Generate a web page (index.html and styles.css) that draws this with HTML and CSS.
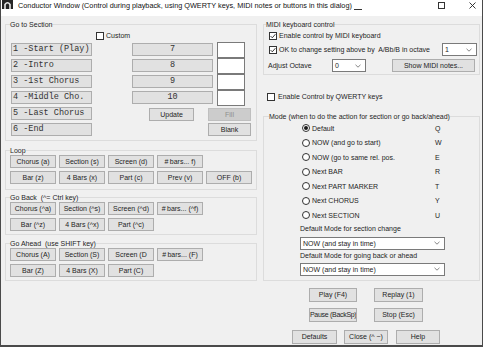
FILE: index.html
```html
<!DOCTYPE html>
<html>
<head>
<meta charset="utf-8">
<title>Conductor Window</title>
<link rel="stylesheet" href="styles.css">
</head>
<body>
<div class="window">
  <div class="titlebar">
    <svg class="appicon" width="11" height="9" viewBox="0 0 11 9"><rect x="0" y="0" width="11" height="9" fill="#262626"/><path d="M3 9 V4.5 Q5.5 1 8 4.5 V9" fill="none" stroke="#e8e8e8" stroke-width="1.6"/></svg>
    <span class="title">Conductor Window (Control during playback, using QWERTY keys, MIDI notes or buttons in this dialog)</span>
    <span class="ctl ctl-min"></span>
    <span class="ctl ctl-max"></span>
    <svg class="ctl ctl-close" width="7" height="7" viewBox="0 0 7 7"><path d="M0.5 0.5 L6.5 6.5 M6.5 0.5 L0.5 6.5" stroke="#222" stroke-width="0.9"/></svg>
  </div>

  <div class="main">
    <div class="leftcol">
      <fieldset class="group g-section">
        <legend>Go to Section</legend>
        <div class="custom-row"><span class="chk"></span><span>Custom</span></div>
        <div class="section-grid">
          <button class="btn mono sec" style="grid-row:1">1 -Start (Play)</button>
          <button class="btn mono sec" style="grid-row:2">2 -Intro</button>
          <button class="btn mono sec" style="grid-row:3">3 -1st Chorus</button>
          <button class="btn mono sec" style="grid-row:4">4 -Middle Cho.</button>
          <button class="btn mono sec" style="grid-row:5">5 -Last Chorus</button>
          <button class="btn mono sec" style="grid-row:6">6 -End</button>
          <button class="btn mono num" style="grid-row:1">7</button>
          <button class="btn mono num" style="grid-row:2">8</button>
          <button class="btn mono num" style="grid-row:3">9</button>
          <button class="btn mono num" style="grid-row:4">10</button>
          <span class="box" style="grid-row:1"></span>
          <span class="box" style="grid-row:2"></span>
          <span class="box" style="grid-row:3"></span>
          <span class="box" style="grid-row:4"></span>
          <button class="btn update">Update</button>
          <button class="btn fill" disabled>Fill</button>
          <button class="btn blank">Blank</button>
        </div>
      </fieldset>

      <fieldset class="group g-loop">
        <legend>Loop</legend>
        <div class="btn-grid">
          <button class="btn">Chorus (a)</button>
          <button class="btn">Section (s)</button>
          <button class="btn">Screen (d)</button>
          <button class="btn">#&#8201;bars... f)</button>
          <span></span>
          <button class="btn">Bar (z)</button>
          <button class="btn">4 Bars (x)</button>
          <button class="btn">Part (c)</button>
          <button class="btn">Prev (v)</button>
          <button class="btn">OFF (b)</button>
        </div>
      </fieldset>

      <fieldset class="group g-back">
        <legend>Go Back&nbsp; (^= Ctrl key)</legend>
        <div class="btn-grid">
          <button class="btn">Chorus (^a)</button>
          <button class="btn">Section (^s)</button>
          <button class="btn">Screen (^d)</button>
          <button class="btn">#&#8201;bars... (^f)</button>
          <span></span>
          <button class="btn">Bar (^z)</button>
          <button class="btn">4 Bars (^x)</button>
          <button class="btn">Part (^c)</button>
        </div>
      </fieldset>

      <fieldset class="group g-ahead">
        <legend>Go Ahead&nbsp; (use SHIFT key)</legend>
        <div class="btn-grid">
          <button class="btn">Chorus (A)</button>
          <button class="btn">Section (S)</button>
          <button class="btn">Screen (D</button>
          <button class="btn">#&#8201;bars... (F)</button>
          <span></span>
          <button class="btn">Bar (Z)</button>
          <button class="btn">4 Bars (X)</button>
          <button class="btn">Part (C)</button>
        </div>
      </fieldset>
    </div>

    <div class="rightcol">
      <fieldset class="group g-midi">
        <legend>MIDI keyboard control</legend>
        <div class="midi-row r1"><span class="chk checked"><svg width="6" height="6" viewBox="0 0 6 6"><path d="M0.6 3.1 L2.3 4.8 L5.4 1.2" fill="none" stroke="#222" stroke-width="0.9"/></svg></span><span>Enable control by MIDI keyboard</span></div>
        <div class="midi-row r2"><span class="chk checked"><svg width="6" height="6" viewBox="0 0 6 6"><path d="M0.6 3.1 L2.3 4.8 L5.4 1.2" fill="none" stroke="#222" stroke-width="0.9"/></svg></span><span>OK to change setting above by&nbsp; A/Bb/B in octave</span>
          <span class="dd dd-oct"><span>1</span><svg class="chev" width="6" height="4" viewBox="0 0 6 4"><path d="M0.5 0.8 L3 3.2 L5.5 0.8" fill="none" stroke="#666" stroke-width="0.8"/></svg></span></div>
        <div class="midi-row r3"><span class="adj-label">Adjust Octave</span>
          <span class="dd dd-adj"><span>0</span><svg class="chev" width="6" height="4" viewBox="0 0 6 4"><path d="M0.5 0.8 L3 3.2 L5.5 0.8" fill="none" stroke="#666" stroke-width="0.8"/></svg></span>
          <button class="btn show-midi">Show MIDI notes...</button></div>
      </fieldset>

      <div class="qwerty-row"><span class="chk"></span><span>Enable Control by QWERTY keys</span></div>

      <fieldset class="group g-mode">
        <legend>Mode (when to do the action for section or go back/ahead)</legend>
        <div class="radio-grid">
          <span class="ritem"><span class="radio on"></span>Default</span><span class="key">Q</span>
          <span class="ritem"><span class="radio"></span>NOW (and go to start)</span><span class="key">W</span>
          <span class="ritem"><span class="radio"></span>NOW (go to same rel. pos.</span><span class="key">E</span>
          <span class="ritem"><span class="radio"></span>Next BAR</span><span class="key">R</span>
          <span class="ritem"><span class="radio"></span>Next PART MARKER</span><span class="key">T</span>
          <span class="ritem"><span class="radio"></span>Next CHORUS</span><span class="key">Y</span>
          <span class="ritem"><span class="radio"></span>Next SECTION</span><span class="key">U</span>
        </div>
        <div class="mode-label l1">Default Mode for section change</div>
        <div class="dd dd-mode d1"><span>NOW (and stay in time)</span><svg class="chev" width="6" height="4" viewBox="0 0 6 4"><path d="M0.5 0.8 L3 3.2 L5.5 0.8" fill="none" stroke="#666" stroke-width="0.8"/></svg></div>
        <div class="mode-label l2">Default Mode for going back or ahead</div>
        <div class="dd dd-mode d2"><span>NOW (and stay in time)</span><svg class="chev" width="6" height="4" viewBox="0 0 6 4"><path d="M0.5 0.8 L3 3.2 L5.5 0.8" fill="none" stroke="#666" stroke-width="0.8"/></svg></div>
      </fieldset>

      <div class="bottom-row b1"><button class="btn w48">Play (F4)</button><button class="btn w49">Replay (1)</button></div>
      <div class="bottom-row b2"><button class="btn w48 tight">Pause (BackSp)</button><button class="btn w49">Stop (Esc)</button></div>
      <div class="bottom-row b3"><button class="btn w45">Defaults</button><button class="btn w44">Close (^ ~)</button><button class="btn w44">Help</button></div>
    </div>
  </div>
</div>
</body>
</html>
```

FILE: styles.css
```css
* { box-sizing: border-box; }

html, body {
  margin: 0;
  padding: 0;
  background: #ffffff;
}

body {
  width: 483px;
  height: 347px;
  overflow: hidden;
  font-family: "Liberation Sans", Arial, sans-serif;
  font-size: 7px;
  color: #1e1e1e;
}

.window {
  width: 483px;
  height: 347px;
  border: 1px solid #4a4a4a;
  border-top: none;
  border-bottom-width: 2px;
  background: #f0f0f0;
  display: flex;
  flex-direction: column;
}

/* ---------- title bar ---------- */
.titlebar {
  flex: none;
  height: 16px;
  background: #fff;
  display: flex;
  align-items: flex-start;
}

.appicon {
  display: block;
  margin-left: 1px;
  flex: none;
}

.title {
  margin-left: 5px;
  font-size: 7.3px;
  line-height: 12px;
  white-space: nowrap;
  color: #111;
}

.ctl { display: block; flex: none; }

.ctl-min {
  margin-left: auto;
  margin-top: 9px;
  width: 8px;
  height: 1px;
  background: #333;
}

.ctl-max {
  margin-left: 76px;
  margin-top: 2px;
  width: 7px;
  height: 7px;
  border: 1px solid #333;
}

.ctl-close {
  margin-left: 24px;
  margin-top: 2px;
  margin-right: 6px;
}

/* ---------- main layout ---------- */
.main {
  flex: 1;
  display: flex;
  gap: 6px;
  padding: 4px 0 0 4px;
}

.leftcol {
  width: 252px;
  flex: none;
  display: flex;
  flex-direction: column;
}

.rightcol {
  width: 217px;
  flex: none;
  display: flex;
  flex-direction: column;
}

/* ---------- group boxes ---------- */
.group {
  margin: 0;
  border: 1px solid #dcdcdc;
  padding: 0 0 0 4px;
  min-width: 0;
}

.group > legend {
  padding: 0;
  margin: 0;
  height: 9px;
  line-height: 9px;
  font-size: 7px;
  white-space: nowrap;
}

/* ---------- generic controls ---------- */
.btn {
  display: block;
  margin: 0;
  padding: 0;
  font: inherit;
  font-size: 7px;
  line-height: 11px;
  height: 13px;
  color: #1e1e1e;
  background: #e1e1e1;
  border: 1px solid #adadad;
  border-radius: 0;
  text-align: center;
  white-space: nowrap;
  overflow: hidden;
}

.btn.tight { letter-spacing: -0.3px; }

.btn:disabled {
  background: #cccccc;
  border-color: #bfbfbf;
  color: #8f8f8f;
}

.mono {
  font-family: "Liberation Mono", "Courier New", monospace;
  font-size: 8.5px;
  color: #333;
}

.chk {
  display: inline-flex;
  align-items: center;
  justify-content: center;
  width: 8px;
  height: 8px;
  border: 1px solid #333;
  background: #fff;
  flex: none;
}

.chk svg { display: block; }

.radio {
  display: inline-flex;
  align-items: center;
  justify-content: center;
  width: 8px;
  height: 8px;
  border: 1px solid #333;
  border-radius: 50%;
  background: #fff;
  flex: none;
  margin-right: 2px;
}

.radio.on::after {
  content: "";
  width: 4px;
  height: 4px;
  border-radius: 50%;
  background: #1a1a1a;
}

.dd {
  display: flex;
  align-items: center;
  height: 13px;
  background: #fff;
  border: 1px solid #7a7a7a;
  padding: 0 4px 0 2px;
  flex: none;
}

.dd .chev {
  display: block;
  margin-left: auto;
}

/* ---------- go to section ---------- */
.g-section {
  padding-bottom: 2px;
}

.custom-row {
  height: 13px;
  display: flex;
  align-items: center;
  padding-left: 86px;
}

.custom-row .chk { margin-right: 2px; }

.section-grid {
  margin-left: 1px;
  display: grid;
  grid-template-columns: 81px 40px 17px 45px 14px 5px 4px 28px 6px;
  grid-template-rows: repeat(6, 16px);
}

.sec {
  grid-column: 1 / 2;
  align-self: start;
  margin-top: 1px;
  text-align: left;
  padding-left: 1px;
}

.num {
  grid-column: 3 / 7;
  align-self: start;
  margin-top: 1px;
}

.box {
  grid-column: 8 / 9;
  display: block;
  background: #fff;
  border: 1px solid #7a7a7a;
}

.update {
  grid-column: 4 / 5;
  grid-row: 5;
  align-self: start;
  margin-top: 2px;
}

.fill {
  grid-column: 6 / 10;
  grid-row: 5;
  align-self: start;
  margin-top: 2px;
}

.blank {
  grid-column: 6 / 10;
  grid-row: 6;
  align-self: start;
  margin-top: 1px;
}

/* ---------- loop / back / ahead ---------- */
.btn-grid {
  display: grid;
  grid-template-columns: repeat(5, 46px);
  grid-auto-rows: 13px;
  column-gap: 3px;
  row-gap: 3px;
}

.g-loop { margin-top: 5px; padding-bottom: 5px; }
.g-back { margin-top: 3px; padding-top: 0; padding-bottom: 3px; }
.g-ahead { margin-top: 4px; padding-bottom: 3px; }

/* ---------- MIDI ---------- */
.g-midi {
  padding: 0 0 1px 2px;
}

.midi-row {
  display: flex;
  align-items: center;
  white-space: nowrap;
}

.midi-row.r1 { height: 13px; padding-left: 3px; }
.midi-row.r2 { height: 15px; padding-left: 3px; }
.midi-row.r3 { height: 15px; margin-top: 1px; padding-left: 2px; }

.midi-row .chk { margin-right: 2px; }

.dd-oct {
  width: 35px;
  margin-left: auto;
  margin-right: 2px;
}

.adj-label {
  width: 64px;
  flex: none;
}

.dd-adj { width: 34px; }

.show-midi {
  width: 83px;
  margin-left: 26px;
}

.qwerty-row {
  margin-top: 15px;
  height: 13px;
  display: flex;
  align-items: center;
  padding-left: 4px;
}

.qwerty-row .chk { margin-right: 3px; }

/* ---------- Mode ---------- */
.g-mode {
  margin-top: 9px;
  padding: 0 0 4px 5px;
}

.radio-grid {
  display: grid;
  grid-template-columns: 133px auto;
  grid-auto-rows: 14.5px;
  padding-left: 33px;
}

.ritem {
  display: flex;
  align-items: center;
  white-space: nowrap;
}

.key {
  display: flex;
  align-items: center;
}

.mode-label {
  padding-left: 31px;
  white-space: nowrap;
}

.mode-label.l1 { height: 11px; line-height: 11px; }
.mode-label.l2 { height: 12px; line-height: 12px; }

.dd-mode {
  width: 145px;
  margin-left: 31px;
}

.dd-mode.d1 { margin-top: 3px; }
.dd-mode.d2 { margin-top: 1px; }

/* ---------- bottom buttons ---------- */
.bottom-row {
  display: flex;
}

.bottom-row .btn { height: 14px; line-height: 12px; }

.bottom-row.b1 { margin-top: 7px; padding-left: 46px; gap: 17px; }
.bottom-row.b2 { margin-top: 6px; padding-left: 46px; gap: 17px; }
.bottom-row.b3 { margin-top: 8px; padding-left: 29px; gap: 7px; }
.bottom-row.b3 .btn:last-child { margin-left: 1px; }

.w44 { width: 44px; }
.w45 { width: 45px; }
.w48 { width: 48px; }
.w49 { width: 49px; }
```
